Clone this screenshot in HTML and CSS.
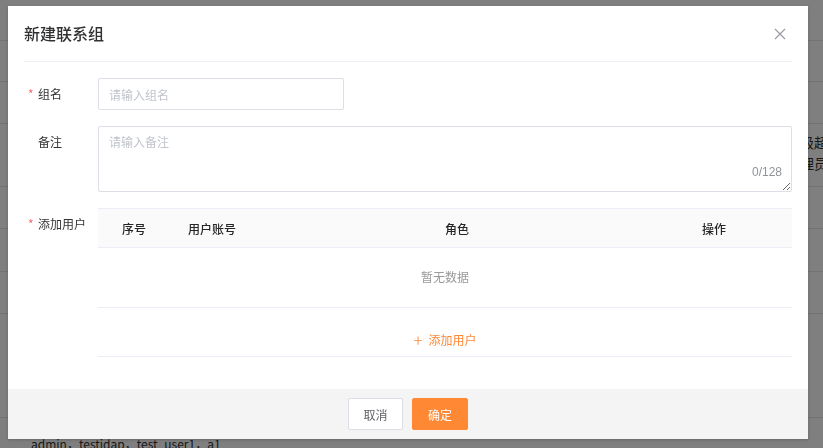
FILE: index.html
```html
<!DOCTYPE html>
<html lang="zh-CN">
<head>
<meta charset="utf-8">
<title>新建联系组</title>
<link rel="stylesheet" href="styles.css">
</head>
<body>
<div class="page">
  <div class="row h1"></div>
  <div class="row h2"></div>
  <div class="row h3"></div>
  <div class="row h4"><div class="side-text"><div>级超级</div><div>理员</div></div></div>
  <div class="row h3"></div>
  <div class="row h6"></div>
  <div class="row h3"></div>
  <div class="row h8"></div>
  <div class="users-text">admin，testidap，test_user1，a1</div>
</div>

<div class="mask">
  <div class="dialog">
    <div class="dlg-head">
      <span class="dlg-title">新建联系组</span>
      <svg class="close" width="12" height="12" viewBox="0 0 12 12"><path d="M1 1 L11 11 M11 1 L1 11" stroke="#9a9ca3" stroke-width="1.2" fill="none"/></svg>
    </div>
    <div class="dlg-body">
      <div class="form-row">
        <div class="label"><span class="req">*</span>组名</div>
        <div class="ctrl"><input class="input" type="text" placeholder="请输入组名"></div>
      </div>
      <div class="form-row">
        <div class="label"><span class="req hidden">*</span>备注</div>
        <div class="ctrl textarea-wrap">
          <textarea class="textarea" placeholder="请输入备注"></textarea>
          <span class="counter">0/128</span>
        </div>
      </div>
      <div class="form-row">
        <div class="label"><span class="req">*</span>添加用户</div>
        <div class="ctrl">
          <div class="table">
            <div class="thead">
              <div class="th c-idx">序号</div>
              <div class="th c-acc">用户账号</div>
              <div class="th c-role">角色</div>
              <div class="th c-op">操作</div>
            </div>
            <div class="empty">暂无数据</div>
            <div class="add-row"><span class="add-btn"><span class="plus">+</span>添加用户</span></div>
          </div>
        </div>
      </div>
    </div>
    <div class="dlg-foot">
      <button class="btn btn-cancel">取消</button>
      <button class="btn btn-ok">确定</button>
    </div>
  </div>
</div>
</body>
</html>
```

FILE: styles.css
```css
* { box-sizing: border-box; }
html, body { margin: 0; padding: 0; }
body {
  width: 823px;
  height: 448px;
  overflow: hidden;
  background: #fff;
  font-family: "Noto Sans CJK SC", "Noto Sans", "Liberation Sans", sans-serif;
  color: #333;
}

/* background page */
.page { width: 823px; }
.row { border-bottom: 1px solid #e6e6e6; position: relative; }
.h1 { height: 41px; }
.h2 { height: 41px; }
.h3 { height: 42px; }
.h4 { height: 63px; display: flex; align-items: center; }
.h6 { height: 43px; }
.h8 { height: 104px; }
.side-text {
  margin-left: 800px;
  font-size: 14px;
  line-height: 21px;
  white-space: nowrap;
  color: #333;
  margin-top: -4px;
}
.users-text {
  padding-left: 31px;
  padding-top: 17px;
  font-size: 12px;
  line-height: 18px;
  color: #333;
  white-space: nowrap;
}

/* overlay */
.mask {
  position: fixed;
  inset: 0;
  background: rgba(0, 0, 0, 0.5);
}
.dialog {
  position: absolute;
  left: 8px;
  top: 6px;
  width: 800px;
  height: 433px;
  background: #fff;
  display: flex;
  flex-direction: column;
  box-shadow: 0 1px 3px rgba(0,0,0,0.2);
}
.dlg-head {
  margin: 0 16px;
  height: 56px;
  border-bottom: 1px solid #ebeef5;
  display: flex;
  align-items: center;
  justify-content: space-between;
}
.dlg-title {
  font-size: 16px;
  font-weight: 500;
  line-height: 22px;
  color: #303133;
  padding-bottom: 1px;
}
.close { margin-right: 6px; display: block; }

.dlg-body {
  flex: 1;
  padding: 16px 16px 0 20px;
}
.form-row { display: flex; margin-bottom: 16px; }
.label {
  width: 70px;
  flex: none;
  font-size: 12px;
  line-height: 32px;
  color: #333;
  white-space: nowrap;
}
.req { display: inline-block; width: 10px; color: #f56c6c; }
.req.hidden { visibility: hidden; }
.ctrl { flex: 1; min-width: 0; }

.input {
  display: block;
  width: 246px;
  height: 32px;
  border: 1px solid #dcdfe6;
  border-radius: 2px;
  padding: 0 10px;
  font-family: inherit;
  font-size: 12px;
  color: #333;
  outline: none;
  background: #fff;
}
.input::placeholder, .textarea::placeholder { color: #c0c4cc; }

.textarea-wrap { position: relative; }
.textarea {
  display: block;
  width: 100%;
  height: 66px;
  border: 1px solid #dcdfe6;
  border-radius: 2px;
  padding: 6px 10px;
  font-family: inherit;
  font-size: 12px;
  line-height: 18px;
  color: #333;
  resize: vertical;
  outline: none;
}
.counter {
  position: absolute;
  right: 10px;
  bottom: 12px;
  font-size: 12px;
  line-height: 16px;
  color: #909399;
  font-family: "Liberation Sans", sans-serif;
}

.table { border-top: 1px solid #ebeef5; }
.thead {
  display: grid;
  grid-template-columns: 72px 108px 358px 156px;
  height: 39px;
  background: #fafafa;
  border-bottom: 1px solid #ebeef5;
  align-items: center;
}
.th { font-size: 12px; color: #262626; text-align: center; font-weight: 500; }
.c-acc { text-align: left; padding-left: 18px; }
.empty {
  height: 60px;
  border-bottom: 1px solid #ebeef5;
  display: flex;
  align-items: center;
  justify-content: center;
  font-size: 12px;
  color: #999;
  padding-bottom: 3px;
}
.add-row {
  height: 49px;
  border-bottom: 1px solid #ebeef5;
  display: flex;
  justify-content: center;
  padding-top: 23px;
}
.add-btn {
  font-size: 12px;
  line-height: 18px;
  height: 18px;
  color: #fe8834;
  display: flex;
  align-items: center;
}
.plus { font-size: 17px; font-weight: 300; margin-right: 6px; line-height: 18px; }

.dlg-foot {
  height: 50px;
  flex: none;
  background: #f4f4f4;
  display: flex;
  justify-content: center;
  align-items: center;
  gap: 9px;
}
.btn {
  height: 32px;
  border-radius: 2px;
  font-family: inherit;
  font-size: 12px;
  padding: 0;
  cursor: pointer;
}
.btn-cancel {
  width: 55px;
  background: #fff;
  border: 1px solid #dcdfe6;
  color: #606266;
}
.btn-ok {
  width: 56px;
  background: #fe8834;
  border: 1px solid #fe8834;
  color: #fff;
}
```
